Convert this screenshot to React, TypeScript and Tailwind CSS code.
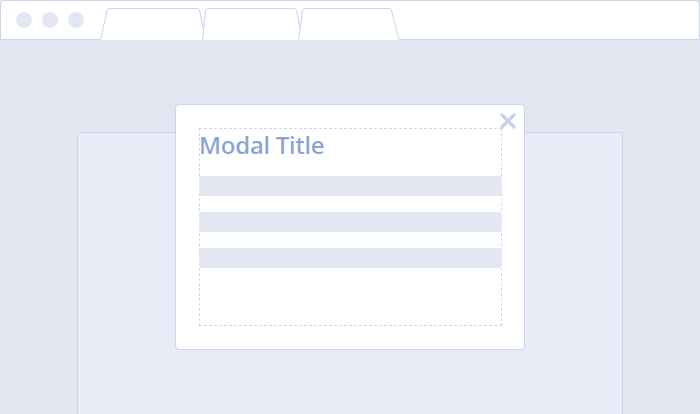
import React from "react"

function Tabs() {
  return (
    <svg width="420" height="40" viewBox="0 0 420 40" className="block">
      <g fill="#ffffff" stroke="#c9d4ee" strokeWidth="1">
        <path d="M100.5 40 L107 10.5 Q107.5 8.5 110 8.5 L197 8.5 Q199 8.5 199.5 10.5 L205.5 40" />
        <path d="M202.5 40 L205.5 10.5 Q206 8.5 208 8.5 L294 8.5 Q296 8.5 296.5 10.5 L302.5 40" />
        <path d="M298.5 40 L302.5 10.5 Q303 8.5 305 8.5 L389 8.5 Q391 8.5 391.5 10.5 L399 40" />
      </g>
    </svg>
  )
}

function Header() {
  return (
    <div className="h-10 shrink-0 bg-white border border-[#c9d4ee] rounded-t-[4px] flex items-stretch relative">
      <div className="flex items-center gap-[10px] pl-[15px] h-full">
        <span className="w-4 h-4 rounded-full bg-[#e2e7f1]" />
        <span className="w-4 h-4 rounded-full bg-[#e2e7f1]" />
        <span className="w-4 h-4 rounded-full bg-[#e2e7f1]" />
      </div>
      <div className="absolute left-[-1px] top-[-1px]">
        <Tabs />
      </div>
    </div>
  )
}

function Modal() {
  return (
    <div className="absolute left-[175px] top-[64px] w-[350px] h-[246px] bg-white border border-[#c9d4ee] rounded-[4px]">
      <svg className="absolute right-[7px] top-[7px]" width="18" height="18" viewBox="0 0 18 18">
        <path d="M2 2 L16 16 M16 2 L2 16" stroke="#c6d1ea" strokeWidth="3.2" />
      </svg>
      <div className="ml-[23px] mt-[23px] w-[303px] h-[198px] border border-dashed border-[#cdd7ef] flex flex-col">
        <h1 className="text-[#8aa3d4] text-[24px] leading-[30px] mt-[1px] -ml-px font-medium font-['Noto_Sans',sans-serif] tracking-[-0.2px]">
          Modal Title
        </h1>
        <div className="mt-[16px] -mx-px flex flex-col gap-4">
          <div className="h-5 rounded-[3px] bg-[#e2e7f1]" />
          <div className="h-5 rounded-[3px] bg-[#e2e7f1]" />
          <div className="h-5 rounded-[3px] bg-[#e2e7f1]" />
        </div>
      </div>
    </div>
  )
}

export default function App() {
  return (
    <div className="w-[700px] h-[414px] bg-[#e2e6f0] flex flex-col overflow-hidden">
      <Header />
      <div className="flex-1 relative">
        <div className="ml-[77px] mt-[92px] w-[546px] h-[300px] bg-[#e8ecf6] border border-[#c9d4ee] rounded-[3px]" />
        <Modal />
      </div>
    </div>
  )
}
